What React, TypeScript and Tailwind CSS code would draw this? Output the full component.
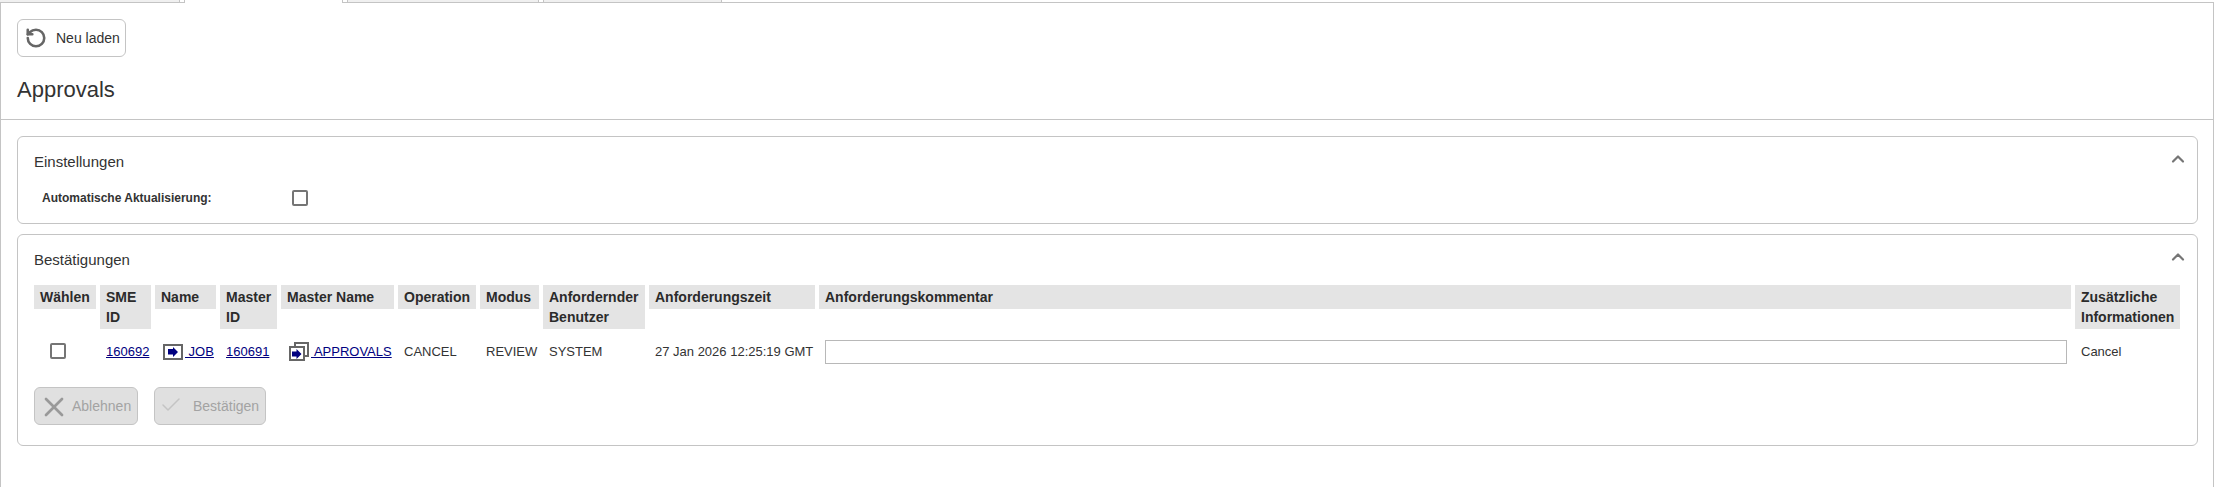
import React from "react";
import { RotateCcw, ChevronUp, X, Check } from "lucide-react";

const columns = [
  { label: "Wählen", width: "w-[62px]" },
  { label: "SME ID", width: "w-[51px]" },
  { label: "Name", width: "w-[61px]" },
  { label: "Master ID", width: "w-[57px]" },
  { label: "Master Name", width: "w-[113px]" },
  { label: "Operation", width: "w-[78px]" },
  { label: "Modus", width: "w-[59px]" },
  { label: "Anfordernder Benutzer", width: "w-[102px]" },
  { label: "Anforderungszeit", width: "w-[166px]" },
  { label: "Anforderungskommentar", width: "" },
  { label: "Zusätzliche Informationen", width: "w-[105px]" },
];

const JobIcon = () => (
  <svg width="20" height="16" viewBox="0 0 20 16" className="mr-[2px] inline-block align-[-4px]">
    <rect x="1" y="1" width="18" height="14" fill="#fff" stroke="#666" strokeWidth="2" />
    <path d="M5 5h5V3l5 5-5 5v-2.500H5z" fill="#000080" />
  </svg>
);

const MasterIcon = () => (
  <svg width="20" height="19" viewBox="0 0 20 19" className="mr-[2px] inline-block align-[-5px]">
    <rect x="6" y="1" width="13" height="13" fill="#fff" stroke="#666" strokeWidth="2" />
    <rect x="1" y="5" width="14" height="13" fill="#fff" stroke="#666" strokeWidth="2" />
    <path d="M3 9.500h4.500V7l5 5-5 5v-2.500H3z" fill="#000080" />
  </svg>
);

const Card = ({ title, className, children }: { title: string; className: string; children: React.ReactNode }) => (
  <section className={`rounded-[6px] border border-[#c4c4c4] ${className}`}>
    <div className="flex items-center justify-between pr-[9px] pl-[16px] pt-[15px]">
      <h2 className="text-[15px] leading-[20px] text-[#333]">{title}</h2>
      <ChevronUp size={20} strokeWidth={2.6} className="-mt-[6px] text-[#757575]" />
    </div>
    {children}
  </section>
);

export default function App() {
  return (
    <div className="h-[487px] bg-white font-['Liberation_Sans',Arial,sans-serif] text-[#333]">
      {/* Tabs, cut off at the top edge */}
      <div className="flex h-[3px] w-[2214px]">
        <div className="w-[180px] border-r border-b border-[#c4c4c4] bg-[#f0f0f0]" />
        <div className="w-[4px] border-b border-[#c4c4c4]" />
        <div className="w-[159px] border-x border-[#c4c4c4]" />
        <div className="w-[4px] border-b border-[#c4c4c4]" />
        <div className="w-[192px] border-x border-b border-[#c4c4c4] bg-[#f0f0f0]" />
        <div className="w-[4px] border-b border-[#c4c4c4]" />
        <div className="w-[179px] border-x border-b border-[#c4c4c4] bg-[#f0f0f0]" />
        <div className="flex-1 border-b border-[#c4c4c4]" />
      </div>

      <main className="h-[484px] w-[2214px] border-x border-[#c4c4c4]">
        <div className="h-[117px] border-b border-[#c4c4c4] pl-[16px] pt-[16px]">
          <button className="flex h-[38px] w-[109px] items-center gap-[9px] rounded-[6px] border border-[#c4c4c4] pl-[7px] text-[14px] text-[#333]">
            <RotateCcw size={22} strokeWidth={2.8} className="text-[#666]" />
            Neu laden
          </button>
          <h1 className="mt-[18px] text-[22px] leading-[30px] text-[#333]">Approvals</h1>
        </div>

        <div className="pl-[16px]">
          <Card title="Einstellungen" className="mt-[16px] h-[88px] w-[2181px]">
            <div className="mt-[18px] flex items-center pl-[24px]">
              <label className="w-[250px] text-[12px] leading-[16px] font-bold">Automatische Aktualisierung:</label>
              <span className="box-border h-[16px] w-[16px] rounded-[2px] border-2 border-[#757575]" />
            </div>
          </Card>

          <Card title="Bestätigungen" className="mt-[10px] h-[212px] w-[2181px]">
            <div className="pl-[12px]">
              <table className="mt-[15px] w-[2154px] table-fixed border-separate border-spacing-x-[4px] border-spacing-y-0 text-[13px]">
                <thead>
                  <tr>
                    {columns.map((col) => (
                      <th key={col.label} className={`p-0 align-top ${col.width}`}>
                        <div className="bg-[#e4e4e4] px-[6px] py-[2px] text-left text-[14px] leading-[20px] font-bold text-[#2b2b2b]">
                          {col.label}
                        </div>
                      </th>
                    ))}
                  </tr>
                </thead>
                <tbody>
                  <tr className="h-[46px] align-middle">
                    <td className="p-0">
                      <span className="-mt-[2px] ml-[16px] block h-[16px] w-[16px] rounded-[2px] border-2 border-[#757575]" />
                    </td>
                    <td className="px-[6px]">
                      <a className="text-[#000080] underline">160692</a>
                    </td>
                    <td className="pl-[8px]">
                      <a className="whitespace-nowrap text-[#000080] underline">
                        <JobIcon /> JOB
                      </a>
                    </td>
                    <td className="px-[6px]">
                      <a className="text-[#000080] underline">160691</a>
                    </td>
                    <td className="pl-[8px]">
                      <a className="whitespace-nowrap text-[#000080] underline">
                        <MasterIcon /> APPROVALS
                      </a>
                    </td>
                    <td className="px-[6px]">CANCEL</td>
                    <td className="px-[6px]">REVIEW</td>
                    <td className="px-[6px]">SYSTEM</td>
                    <td className="px-[6px] whitespace-nowrap">27 Jan 2026 12:25:19 GMT</td>
                    <td className="pr-[4px] pl-[6px]">
                      <input className="block h-[24px] w-full border border-[#b8b8b8]" aria-label="Anforderungskommentar" />
                    </td>
                    <td className="px-[6px]">Cancel</td>
                  </tr>
                </tbody>
              </table>

              <div className="mt-[12px] flex gap-[16px] pl-[4px]">
                <button
                  disabled
                  className="flex h-[38px] w-[104px] items-center gap-[2px] rounded-[6px] border border-[#c4c4c4] bg-[#e0e0e0] pl-[3px] text-[14px] text-[#a3a3a3]"
                >
                  <X size={32} strokeWidth={2} className="mt-[2px] text-[#999]" />
                  Ablehnen
                </button>
                <button
                  disabled
                  className="flex h-[38px] w-[112px] items-center gap-[10px] rounded-[6px] border border-[#c4c4c4] bg-[#e0e0e0] pl-[4px] text-[14px] text-[#a3a3a3]"
                >
                  <Check size={24} strokeWidth={1.5} className="-mt-[3px] text-[#c4c4c4]" />
                  Bestätigen
                </button>
              </div>
            </div>
          </Card>
        </div>
      </main>
    </div>
  );
}
